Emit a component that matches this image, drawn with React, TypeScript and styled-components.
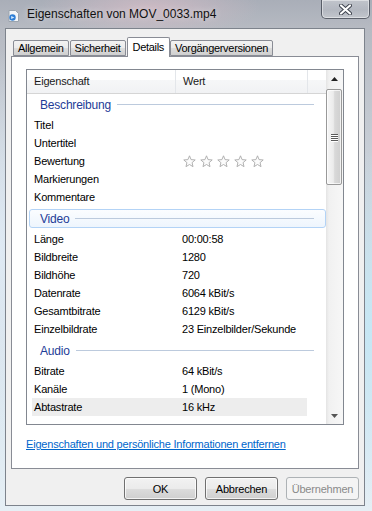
import { Fragment } from 'react'
import styled, { createGlobalStyle } from 'styled-components'

type Row = { label: string; value?: string; stars?: boolean; selected?: boolean }
type Group = { title: string; focused?: boolean; rows: Row[] }

const groups: Group[] = [
	{
		title: 'Beschreibung',
		rows: [
			{ label: 'Titel' },
			{ label: 'Untertitel' },
			{ label: 'Bewertung', stars: true },
			{ label: 'Markierungen' },
			{ label: 'Kommentare' },
		],
	},
	{
		title: 'Video',
		focused: true,
		rows: [
			{ label: 'Länge', value: '00:00:58' },
			{ label: 'Bildbreite', value: '1280' },
			{ label: 'Bildhöhe', value: '720' },
			{ label: 'Datenrate', value: '6064 kBit/s' },
			{ label: 'Gesamtbitrate', value: '6129 kBit/s' },
			{ label: 'Einzelbildrate', value: '23 Einzelbilder/Sekunde' },
		],
	},
	{
		title: 'Audio',
		rows: [
			{ label: 'Bitrate', value: '64 kBit/s' },
			{ label: 'Kanäle', value: '1 (Mono)' },
			{ label: 'Abtastrate', value: '16 kHz', selected: true },
		],
	},
	{ title: 'Medien', rows: [] },
]

const GlobalStyle = createGlobalStyle`
  body {
    margin: 0;
    font-family: 'Liberation Sans', Arial, sans-serif;
  }
`

const Window = styled.div`
  width: 372px;
  height: 511px;
  display: flex;
  flex-direction: column;
  overflow: hidden;
  background:
    radial-gradient(ellipse 110px 30px at 150px 8px, rgba(214, 188, 198, 0.75), transparent),
    radial-gradient(ellipse 60px 180px at 372px 330px, rgba(196, 232, 246, 0.9), transparent),
    radial-gradient(ellipse 40px 200px at 0px 250px, rgba(225, 236, 246, 0.9), transparent),
    linear-gradient(180deg, #a9aeb8 0%, #b6bac2 28px, #c9d0d8 160px, #dde9f1 420px, #e6eff5 511px);
`

const TitleBar = styled.div`
  height: 28px;
  display: flex;
  align-items: flex-start;
  flex-shrink: 0;
`

const TitleIcon = styled.svg`
  margin: 10px 0 0 8px;
`

const TitleText = styled.div`
  margin: 6px 0 0 8px;
  font-size: 12px;
  line-height: 16px;
  color: #111;
  text-shadow: 0 0 6px rgba(255, 255, 255, 0.6);
`

const CloseButton = styled.div`
  margin-left: auto;
  margin-right: 2px;
  width: 49px;
  height: 19px;
  box-sizing: border-box;
  border: 1px solid rgba(55, 60, 72, 0.75);
  border-top: none;
  border-radius: 0 0 5px 5px;
  background: linear-gradient(180deg, rgba(255, 255, 255, 0.28), rgba(255, 255, 255, 0.08) 55%, rgba(255, 255, 255, 0.22));
  box-shadow: inset 0 0 0 1px rgba(255, 255, 255, 0.45);
  display: flex;
  align-items: center;
  justify-content: center;
`

const Client = styled.div`
  flex: 1;
  margin: 0 7px 5px 5px;
  border: 1px solid #7d838c;
  background: #f0f0f0;
  padding: 8px 5px 5px;
  display: flex;
  flex-direction: column;
  font-size: 11px;
  letter-spacing: -0.2px;
  color: #000;
`

const TabStrip = styled.div`
  display: flex;
  align-items: flex-end;
  height: 20px;
  margin-bottom: -1px;
  padding-left: 2px;
  position: relative;
  z-index: 1;
`

const Tab = styled.div<{ $active?: boolean }>`
  box-sizing: border-box;
  height: ${(p) => (p.$active ? '20px' : '16px')};
  margin-bottom: ${(p) => (p.$active ? '0' : '1px')};
  margin-right: ${(p) => (p.$active ? '0' : '1px')};
  padding: ${(p) => (p.$active ? '2px 5px 0' : '0 4px')};
  border: 1px solid #898c95;
  border-bottom: ${(p) => (p.$active ? 'none' : '1px solid #898c95')};
  border-radius: 2px 2px 0 0;
  line-height: 14px;
  letter-spacing: -0.3px;
  background: ${(p) =>
		p.$active ? '#ffffff' : 'linear-gradient(180deg, #f2f2f2 0%, #ebebeb 50%, #dddddd 51%, #cfcfcf 100%)'};
`

const TabPanel = styled.div`
  height: 413px;
  box-sizing: border-box;
  border: 1px solid #898c95;
  background: #fff;
  padding: 12px 14px 0;
  display: flex;
  flex-direction: column;
`

const ListView = styled.div`
  height: 356px;
  box-sizing: border-box;
  border: 1px solid #828790;
  display: flex;
  overflow: hidden;
`

const ListMain = styled.div`
  flex: 1;
  display: flex;
  flex-direction: column;
  overflow: hidden;
`

const Header = styled.div`
  height: 24px;
  flex-shrink: 0;
  box-sizing: border-box;
  display: flex;
  border-bottom: 1px solid #d5d5d5;
  background: linear-gradient(180deg, #ffffff 0%, #ffffff 42%, #f6f7f8 43%, #f1f2f4 100%);
`

const HeaderCell = styled.div<{ $width?: number }>`
  box-sizing: border-box;
  width: ${(p) => (p.$width ? `${p.$width}px` : 'auto')};
  flex: ${(p) => (p.$width ? 'none' : '1')};
  border-right: ${(p) => (p.$width ? '1px solid #e3e6ea' : 'none')};
  padding-left: 7px;
  line-height: 23px;
  color: #1a1a1a;
`

const Body = styled.div`
  flex: 1;
  overflow: hidden;
`

const GroupHeader = styled.div<{ $focused?: boolean; $first?: boolean }>`
  height: 19px;
  box-sizing: border-box;
  margin: ${(p) => (p.$first ? '1px' : '3px')} 0 2px 2px;
  padding: 0 11px 0 10px;
  display: flex;
  align-items: center;
  gap: 6px;
  border: 1px solid ${(p) => (p.$focused ? '#b3d3f6' : 'transparent')};
  border-radius: 3px;
  background: ${(p) => (p.$focused ? 'linear-gradient(180deg, #fbfdff, #eef5fd)' : 'transparent')};
`

const GroupTitle = styled.span`
  font-size: 12px;
  color: #1e3c97;
`

const GroupLine = styled.div`
  flex: 1;
  height: 1px;
  background: #bccadd;
`

const DataRow = styled.div<{ $selected?: boolean }>`
  width: 275px;
  height: 18px;
  margin-left: 5px;
  display: flex;
  align-items: center;
  background: ${(p) => (p.$selected ? '#ededed' : 'transparent')};
`

const Label = styled.div`
  width: 150px;
  padding-left: 2px;
  box-sizing: border-box;
  flex-shrink: 0;
`

const Value = styled.div`
  white-space: nowrap;
`

const Stars = styled.div`
  display: flex;
  gap: 4px;
  margin-left: 1px;
`

const ScrollBar = styled.div`
  width: 17px;
  flex-shrink: 0;
  display: flex;
  flex-direction: column;
  background: linear-gradient(90deg, #e4e4e4 0%, #f1f1f1 18%, #f7f7f7 100%);
`

const ArrowButton = styled.div`
  height: 17px;
  display: flex;
  align-items: center;
  justify-content: center;
`

const Thumb = styled.div`
  height: 96px;
  margin: 2px 1px 0 0;
  box-sizing: border-box;
  border: 1px solid #999;
  border-radius: 2px;
  background: linear-gradient(90deg, #f6f6f6 0%, #ececec 45%, #d9d9d9 55%, #cfcfcf 100%);
  box-shadow: inset 0 0 0 1px rgba(255, 255, 255, 0.7);
  display: flex;
  flex-direction: column;
  align-items: center;
  justify-content: center;
  gap: 1px;
`

const Grip = styled.div`
  width: 7px;
  height: 1px;
  background: #5a5a5a;
  box-shadow: 0 1px 0 #fff;
`

const Spacer = styled.div`
  flex: 1;
`

const RemoveLink = styled.a`
  margin-top: 12px;
  align-self: flex-start;
  color: #0066cc;
  text-decoration: underline;
  line-height: 15px;
  cursor: pointer;
`

const ButtonRow = styled.div`
  margin-top: 8px;
  display: flex;
  justify-content: flex-end;
  gap: 8px;
`

const Button = styled.button`
  width: 73px;
  height: 23px;
  padding: 0;
  font: inherit;
  letter-spacing: -0.2px;
  color: #000;
  border: 1px solid #707070;
  border-radius: 3px;
  background: linear-gradient(180deg, #f2f2f2 0%, #ebebeb 50%, #dddddd 51%, #cfcfcf 100%);
  box-shadow: inset 0 0 0 1px rgba(255, 255, 255, 0.75);

  &:disabled {
    color: #8a8a8a;
    border-color: #adb2b5;
    background: #f4f4f4;
    box-shadow: none;
  }
`

function Star() {
	return (
		<svg width="13" height="13" viewBox="0 0 13 13">
			<polygon
				points="6.5,0.8 8.09,4.62 12.21,4.95 9.07,7.63 10.03,11.65 6.5,9.5 2.97,11.65 3.93,7.63 0.79,4.95 4.91,4.62"
				fill="#fbfbfb"
				stroke="#a9a9a9"
				strokeWidth="0.9"
				strokeLinejoin="round"
			/>
		</svg>
	)
}

export default function App() {
	return (
		<>
			<GlobalStyle />
			<Window>
				<TitleBar>
					<TitleIcon width="11" height="12" viewBox="0 0 11 12">
						<path d="M1 0.5 H7.5 L10.5 3.5 V11.5 H1 Z" fill="#f4f6f8" stroke="#9aa3ad" />
						<circle cx="4.5" cy="7.5" r="3.2" fill="#2f7fd6" />
						<path d="M3.2 6 L6.4 7.5 L3.2 9 Z" fill="#d8ecff" />
					</TitleIcon>
					<TitleText>Eigenschaften von MOV_0033.mp4</TitleText>
					<CloseButton>
						<svg width="13" height="11" viewBox="0 0 13 11">
							<path d="M2 1.5 L11 9.5 M11 1.5 L2 9.5" stroke="#3a3f4a" strokeWidth="4" strokeLinecap="round" />
							<path d="M2 1.5 L11 9.5 M11 1.5 L2 9.5" stroke="#ffffff" strokeWidth="2.2" strokeLinecap="round" />
						</svg>
					</CloseButton>
				</TitleBar>
				<Client>
					<TabStrip>
						<Tab>Allgemein</Tab>
						<Tab>Sicherheit</Tab>
						<Tab $active>Details</Tab>
						<Tab>Vorgängerversionen</Tab>
					</TabStrip>
					<TabPanel>
						<ListView>
							<ListMain>
								<Header>
									<HeaderCell $width={149}>Eigenschaft</HeaderCell>
									<HeaderCell $width={132}>Wert</HeaderCell>
									<HeaderCell />
								</Header>
								<Body>
									{groups.map((group, gi) => (
										<Fragment key={group.title}>
											<GroupHeader $focused={group.focused} $first={gi === 0}>
												<GroupTitle>{group.title}</GroupTitle>
												<GroupLine />
											</GroupHeader>
											{group.rows.map((row) => (
												<DataRow key={row.label} $selected={row.selected}>
													<Label>{row.label}</Label>
													{row.stars ? (
														<Stars>
															{[0, 1, 2, 3, 4].map((i) => (
																<Star key={i} />
															))}
														</Stars>
													) : (
														<Value>{row.value}</Value>
													)}
												</DataRow>
											))}
										</Fragment>
									))}
								</Body>
							</ListMain>
							<ScrollBar>
								<ArrowButton>
									<svg width="7" height="4" viewBox="0 0 7 4">
										<path d="M0 4 L3.5 0 L7 4 Z" fill="#222" />
									</svg>
								</ArrowButton>
								<Thumb>
									<Grip />
									<Grip />
									<Grip />
									<Grip />
								</Thumb>
								<Spacer />
								<ArrowButton>
									<svg width="7" height="4" viewBox="0 0 7 4">
										<path d="M0 0 L7 0 L3.5 4 Z" fill="#555" />
									</svg>
								</ArrowButton>
							</ScrollBar>
						</ListView>
						<RemoveLink>Eigenschaften und persönliche Informationen entfernen</RemoveLink>
					</TabPanel>
					<ButtonRow>
						<Button>OK</Button>
						<Button>Abbrechen</Button>
						<Button disabled>Übernehmen</Button>
					</ButtonRow>
				</Client>
			</Window>
		</>
	)
}
